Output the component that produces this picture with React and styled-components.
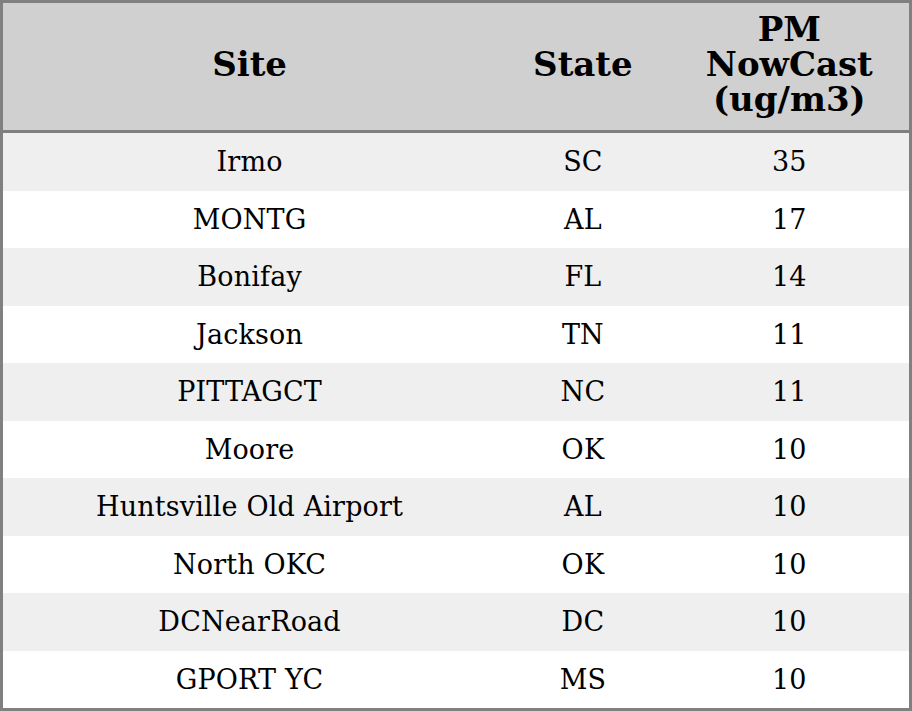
import styled, { createGlobalStyle } from "styled-components";

const GlobalStyle = createGlobalStyle`
    html, body {
        margin: 0;
        padding: 0;
        background: #ffffff;
    }
    body {
        font-family: "DejaVu Serif", serif;
    }
`;

const Tabela = styled.table`
    width: 912px;
    height: 711px;
    border-collapse: collapse;
    border: 3px solid #808080;
    table-layout: fixed;
    color: #000;
`;

const Coluna = styled.col`
    width: ${(props) => props.$largura}px;
`;

const Cabecalho = styled.th`
    height: 123px;
    padding: 0 4px 4px;
    background-color: #d0d0d0;
    border-bottom: 3px solid #808080;
    font-size: 34px;
    font-weight: bold;
    line-height: 35px;
    text-align: center;
    vertical-align: middle;
`;

const Linha = styled.tr`
    background-color: ${(props) => (props.$par ? "#efefef" : "#ffffff")};
`;

const Celula = styled.td`
    height: 57.5px;
    padding: 0 4px;
    font-size: 27px;
    letter-spacing: 0.15px;
    text-align: center;
    vertical-align: middle;
`;

const dados = [
    { site: "Irmo", estado: "SC", valor: 35 },
    { site: "MONTG", estado: "AL", valor: 17 },
    { site: "Bonifay", estado: "FL", valor: 14 },
    { site: "Jackson", estado: "TN", valor: 11 },
    { site: "PITTAGCT", estado: "NC", valor: 11 },
    { site: "Moore", estado: "OK", valor: 10 },
    { site: "Huntsville Old Airport", estado: "AL", valor: 10 },
    { site: "North OKC", estado: "OK", valor: 10 },
    { site: "DCNearRoad", estado: "DC", valor: 10 },
    { site: "GPORT YC", estado: "MS", valor: 10 },
];

const App = () => {
    return (
        <>
            <GlobalStyle />
            <Tabela>
                <colgroup>
                    <Coluna $largura={493} />
                    <Coluna $largura={173} />
                    <Coluna $largura={240} />
                </colgroup>
                <thead>
                    <tr>
                        <Cabecalho>Site</Cabecalho>
                        <Cabecalho>State</Cabecalho>
                        <Cabecalho>PM NowCast (ug/m3)</Cabecalho>
                    </tr>
                </thead>
                <tbody>
                    {dados.map((linha, i) => (
                        <Linha key={i} $par={i % 2 === 0}>
                            <Celula>{linha.site}</Celula>
                            <Celula>{linha.estado}</Celula>
                            <Celula>{linha.valor}</Celula>
                        </Linha>
                    ))}
                </tbody>
            </Tabela>
        </>
    );
};

export default App;
